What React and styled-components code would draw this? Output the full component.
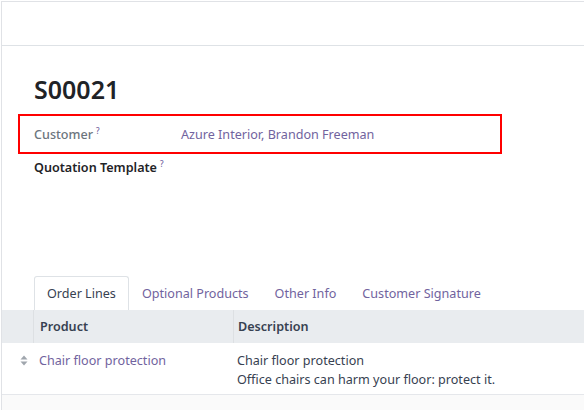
import React from 'react'
import styled, {createGlobalStyle} from 'styled-components'

const GlobalStyle = createGlobalStyle`
    html, body {
        margin: 0;
        padding: 0;
        background: #fff;
        font-family: "Noto Sans", "Open Sans", sans-serif;
        color: #212529;
    }
    * {
        box-sizing: border-box;
    }
`

const Frame = styled.div`
    width: 583px;
    height: 409px;
    margin: 1px 0 0 1px;
    border-left: 1px solid #e0e2e6;
    border-top: 1px solid #e0e2e6;
    overflow: hidden;
    display: flex;
    flex-direction: column;
`

const ControlPanel = styled.div`
    height: 44px;
    flex-shrink: 0;
    border-bottom: 1px solid #dee2e6;
`

const Sheet = styled.div`
    padding: 27px 0 0 32px;
    display: flex;
    flex-direction: column;
`

const Title = styled.h1`
    margin: 0;
    font-size: 25px;
    font-weight: 600;
    line-height: 33px;
    color: #1f2327;
`

const Highlight = styled.div`
    margin: 8px 0 0 -16px;
    width: 484px;
    height: 40px;
    border: 2px solid #ff0000;
    display: flex;
    align-items: center;
    padding-left: 14px;
`

const Field = styled.div`
    display: flex;
    align-items: center;
    font-size: 12.6px;
    height: ${p => p.h || 22}px;
`

const Label = styled.span`
    width: 147px;
    color: ${p => p.muted ? '#6c757d' : '#1f2327'};
    font-weight: ${p => p.muted ? 500 : 600};
`

const Help = styled.sup`
    color: #71639e;
    font-size: 8px;
    margin-left: 3px;
    font-weight: 500;
`

const Link = styled.span`
    color: #71639e;
`

const Notebook = styled.div`
    margin-top: 96px;
    display: flex;
    flex-direction: column;
`

const TabBar = styled.div`
    display: flex;
    padding-left: 32px;
    height: 34px;
    align-items: stretch;
`

const Tab = styled.div`
    display: flex;
    align-items: center;
    padding: 0 12px;
    font-size: 12.6px;
    color: ${p => p.active ? '#374151' : '#71639e'};
    background: ${p => p.active ? '#fff' : 'transparent'};
    border: 1px solid ${p => p.active ? '#dee2e6' : 'transparent'};
    border-bottom: none;
    border-radius: 3px 3px 0 0;
`

const Table = styled.div`
    display: flex;
    flex-direction: column;
`

const Row = styled.div`
    display: grid;
    grid-template-columns: 31px 200px 1fr;
    background: ${p => p.head ? '#e9ecef' : '#fff'};
    border-bottom: ${p => p.head ? 'none' : '1px solid #e5e7eb'};
    font-size: 12.6px;
`

const Cell = styled.div`
    padding: ${p => p.head ? '0 6px' : '8px 4px 5px'};
    padding-left: ${p => p.first ? 6 : 4}px;
    height: ${p => p.head ? '33px' : 'auto'};
    display: flex;
    flex-direction: column;
    justify-content: ${p => p.head ? 'center' : 'flex-start'};
    font-weight: ${p => p.head ? 600 : 400};
    border-left: ${p => p.head && p.sep ? '1px solid #dde0e3' : 'none'};
    line-height: 19px;
    color: #374151;
`

const Handle = styled.div`
    display: flex;
    justify-content: flex-end;
    padding: 12px 5px 0 0;
`

const Rest = styled.div`
    flex: 1;
    background: #fafafa;
`

const DescLine = styled.span`
    color: #374151;
`

const HandleIcon = () => (
    <svg width="8" height="11" viewBox="0 0 8 11">
        <path d="M4 0.5 L7.5 4.5 H0.5 Z" fill="#a0a6ad"/>
        <path d="M4 10.5 L7.5 6.5 H0.5 Z" fill="#a0a6ad"/>
    </svg>
)

export default function App() {
    return (
        <>
            <GlobalStyle/>
            <Frame>
                <ControlPanel/>
                <Sheet>
                    <Title>S00021</Title>
                    <Highlight>
                        <Field>
                            <Label muted>Customer<Help>?</Help></Label>
                            <Link>Azure Interior, Brandon Freeman</Link>
                        </Field>
                    </Highlight>
                    <Field h={26}>
                        <Label>Quotation Template<Help>?</Help></Label>
                    </Field>
                </Sheet>
                <Notebook>
                    <TabBar>
                        <Tab active>Order Lines</Tab>
                        <Tab>Optional Products</Tab>
                        <Tab>Other Info</Tab>
                        <Tab>Customer Signature</Tab>
                    </TabBar>
                    <Table>
                        <Row head>
                            <Cell head/>
                            <Cell head sep first>Product</Cell>
                            <Cell head sep>Description</Cell>
                        </Row>
                        <Row>
                            <Handle><HandleIcon/></Handle>
                            <Cell first><Link>Chair floor protection</Link></Cell>
                            <Cell>
                                <DescLine>Chair floor protection</DescLine>
                                <DescLine>Office chairs can harm your floor: protect it.</DescLine>
                            </Cell>
                        </Row>
                    </Table>
                </Notebook>
                <Rest/>
            </Frame>
        </>
    )
}
